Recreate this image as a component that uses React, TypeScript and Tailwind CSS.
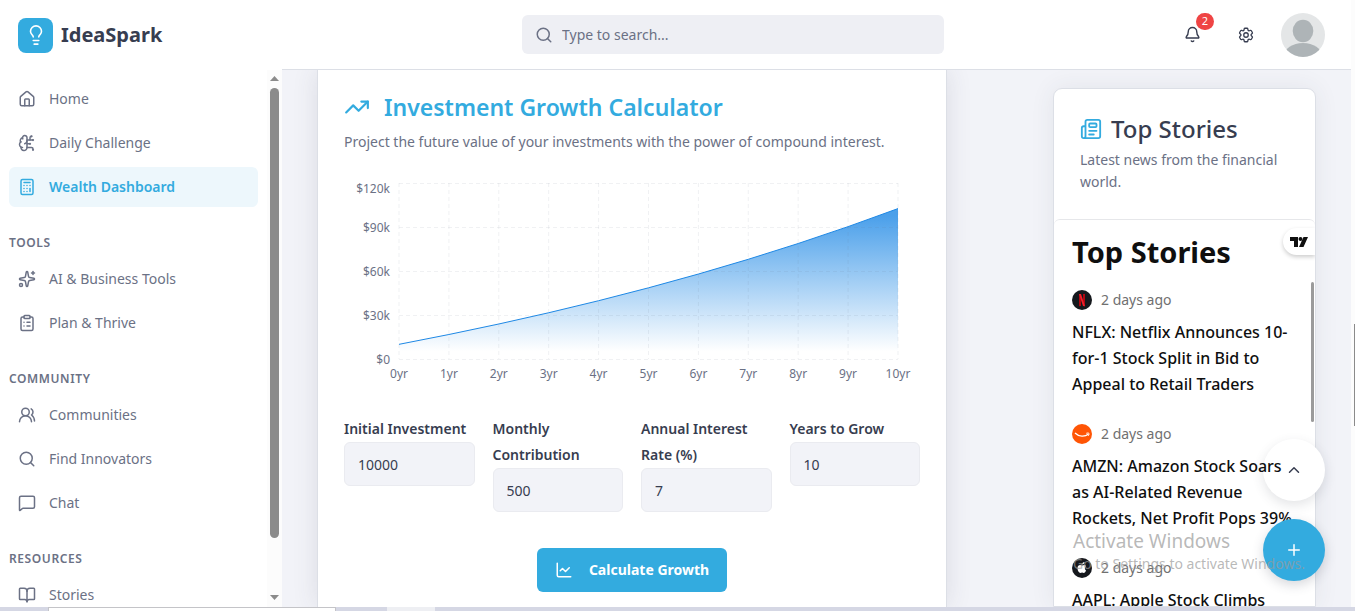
import React, { useState } from 'react';
import {
  Bell,
  BookOpen,
  BrainCircuit,
  Calculator,
  ChartLine,
  ChevronUp,
  ClipboardList,
  House,
  Lightbulb,
  MessageSquare,
  Newspaper,
  Plus,
  Search,
  Sparkles,
  TrendingUp,
  UsersRound,
  type LucideIcon,
} from 'lucide-react';
import { HiOutlineCog6Tooth } from 'react-icons/hi2';

interface NavEntry {
  label: string;
  icon: LucideIcon;
  active?: boolean;
}

const NAV: { title?: string; items: NavEntry[] }[] = [
  {
    items: [
      { label: 'Home', icon: House },
      { label: 'Daily Challenge', icon: BrainCircuit },
      { label: 'Wealth Dashboard', icon: Calculator, active: true },
    ],
  },
  {
    title: 'Tools',
    items: [
      { label: 'AI & Business Tools', icon: Sparkles },
      { label: 'Plan & Thrive', icon: ClipboardList },
    ],
  },
  {
    title: 'Community',
    items: [
      { label: 'Communities', icon: UsersRound },
      { label: 'Find Innovators', icon: Search },
      { label: 'Chat', icon: MessageSquare },
    ],
  },
  {
    title: 'Resources',
    items: [{ label: 'Stories', icon: BookOpen }],
  },
];

const Sidebar: React.FC = () => (
  <aside className="flex w-[282px] shrink-0 flex-col overflow-hidden bg-white">
    <a href="#" className="flex h-[70px] shrink-0 items-center gap-2 px-[18px]">
      <span className="flex size-[35px] items-center justify-center rounded-lg bg-[#33abdf] text-white">
        <Lightbulb size={22} strokeWidth={1.75} />
      </span>
      <span className="text-xl font-bold text-[#373d50]">IdeaSpark</span>
    </a>
    <div className="flex min-h-0 flex-1">
      <nav className="min-w-0 flex-1 overflow-hidden pt-[9px] pr-[9px] pl-[9px]">
        {NAV.map((section, i) => (
          <div key={i}>
            {section.title && (
              <h2 className="mt-6 mb-1 text-xs leading-6 font-semibold tracking-wider text-[#6b7185] uppercase">
                {section.title}
              </h2>
            )}
            <ul className="flex flex-col gap-1">
              {section.items.map(({ label, icon: Icon, active }) => (
                <li key={label}>
                  <a
                    href="#"
                    className={`flex h-10 items-center gap-[13px] rounded-md px-[9px] text-sm ${
                      active ? 'bg-[#edf7fc] font-semibold text-[#33abdf]' : 'text-[#6b7185]'
                    }`}
                  >
                    <Icon size={18} strokeWidth={2} />
                    {label}
                  </a>
                </li>
              ))}
            </ul>
          </div>
        ))}
      </nav>
      <div className="flex w-[15px] flex-col items-center bg-[#fcfcfc] pt-[6px] pb-[7px]">
        <svg width="9" height="5" viewBox="0 0 9 5" fill="#8b8b8b"><path d="M0 5 4.500 0 9 5z" /></svg>
        <div className="mt-[7px] h-[450px] w-[9px] rounded-full bg-[#8b8b8b]" />
        <svg className="mt-auto" width="9" height="5" viewBox="0 0 9 5" fill="#8b8b8b"><path d="M0 0 4.500 5 9 0z" /></svg>
      </div>
    </div>
  </aside>
);

const Header: React.FC = () => (
  <header className="flex h-[70px] shrink-0 items-center border-b border-[#dcdfe6] bg-white pr-[26px]">
    <div className="flex flex-1 justify-center">
      <label className="flex h-[39px] w-[422px] items-center gap-[9px] rounded-md bg-[#eeeff4] px-[13px] text-[#6b7185]">
        <Search size={18} strokeWidth={2} />
        <input
          type="search"
          aria-label="Search"
          placeholder="Type to search..."
          className="min-w-0 flex-1 bg-transparent text-sm outline-none placeholder:text-[#6b7185]"
        />
      </label>
    </div>
    <button aria-label="Notifications" className="relative mr-[36px] text-[#373d50]">
      <Bell size={17} strokeWidth={2} />
      <span className="absolute -top-[13px] left-3 flex h-[17px] w-[18px] items-center justify-center rounded-full bg-[#ef4444] text-[11px] text-white">
        2
      </span>
    </button>
    <button aria-label="Settings" className="mr-[26px] text-[#373d50]">
      <HiOutlineCog6Tooth size={18} strokeWidth={1.75} />
    </button>
    <button aria-label="Account" className="size-11 overflow-hidden rounded-full">
      <svg viewBox="0 0 44 44" className="size-full">
        <rect width="44" height="44" fill="#e4e6e7" />
        <ellipse cx="22" cy="18" rx="10.300" ry="11.300" fill="#aeb4b7" />
        <ellipse cx="22" cy="43" rx="19" ry="13" fill="#aeb4b7" />
      </svg>
    </button>
  </header>
);

const PLOT = { left: 55, right: 554, top: 13, bottom: 189 };
const MAX_VALUE = 120000;

const GrowthChart: React.FC<{ values: number[] }> = ({ values }) => {
  const years = values.length - 1;
  const x = (i: number) => PLOT.left + ((PLOT.right - PLOT.left) * i) / years;
  const y = (v: number) => PLOT.bottom - ((PLOT.bottom - PLOT.top) * v) / MAX_VALUE;
  const line = values.map((v, i) => `${i ? 'L' : 'M'}${x(i)} ${y(v)}`).join('');

  return (
    <svg viewBox="0 0 576 220" className="w-full text-xs" role="img" aria-label="Projected growth">
      <defs>
        <linearGradient id="growth" x1="0" y1="0" x2="0" y2="1">
          <stop offset="5%" stopColor="#1e88e5" stopOpacity={0.8} />
          <stop offset="95%" stopColor="#1e88e5" stopOpacity={0} />
        </linearGradient>
      </defs>
      <path d={`${line}V${PLOT.bottom}H${PLOT.left}Z`} fill="url(#growth)" />
      <g stroke="#6b7185" strokeOpacity="0.1" strokeDasharray="4 3">
        {[0, 30000, 60000, 90000, 120000].map((v) => (
          <path key={v} d={`M${PLOT.left} ${y(v) + 0.5}H${PLOT.right}`} />
        ))}
        {values.map((_, i) => (
          <path key={i} d={`M${x(i)} ${PLOT.top}V${PLOT.bottom}`} />
        ))}
      </g>
      <path d={line} fill="none" stroke="#1e88e5" />
      <g fill="#6b7185">
        {[0, 30, 60, 90, 120].map((k) => (
          <text key={k} x="46" y={Math.max(y(k * 1000), 18) + 5} textAnchor="end">
            {k ? `$${k}k` : '$0'}
          </text>
        ))}
        {values.map((_, i) => (
          <text key={i} x={x(i)} y="208" textAnchor="middle">
            {i}yr
          </text>
        ))}
      </g>
    </svg>
  );
};

const FIELDS = [
  { id: 'initial', label: 'Initial Investment' },
  { id: 'monthly', label: 'Monthly Contribution' },
  { id: 'rate', label: 'Annual Interest Rate (%)' },
  { id: 'years', label: 'Years to Grow' },
] as const;

type Form = Record<(typeof FIELDS)[number]['id'], string>;

const project = (form: Form) => {
  const values = [Number(form.initial)];
  for (let i = 0; i < Math.max(1, Number(form.years)); i++) {
    values.push(values[i] * (1 + Number(form.rate) / 100) + Number(form.monthly) * 12);
  }
  return values;
};

const GrowthCalculator: React.FC = () => {
  const [form, setForm] = useState<Form>({ initial: '10000', monthly: '500', rate: '7', years: '10' });
  const [values, setValues] = useState(() => project(form));

  return (
    <section className="min-w-0 flex-1 border-x border-[#dcdfe6] bg-white px-[26px] pt-[19px] shadow-[0_0_24px_rgba(55,61,80,0.12)]">
      <h1 className="flex items-center gap-[14px] text-[23px] leading-9 font-semibold text-[#33abdf]">
        <TrendingUp size={26} />
        Investment Growth Calculator
      </h1>
      <p className="mt-[5px] text-sm leading-6 text-[#6b7185]">
        Project the future value of your investments with the power of compound interest.
      </p>
      <div className="mt-4">
        <GrowthChart values={values} />
      </div>
      <form
        onSubmit={(e) => {
          e.preventDefault();
          setValues(project(form));
        }}
      >
        <div className="mt-[26px] grid grid-cols-4 items-start gap-[18px]">
          {FIELDS.map(({ id, label }) => (
            <div key={id}>
              <label htmlFor={id} className="block text-sm leading-[26px] font-semibold text-[#373d50]">
                {label}
              </label>
              <input
                id={id}
                inputMode="decimal"
                value={form[id]}
                onChange={(e) => setForm({ ...form, [id]: e.target.value })}
                className="h-11 w-full rounded-md border border-[#eaebf0] bg-[#f2f3f8] px-[13px] text-sm text-[#373d50] outline-none"
              />
            </div>
          ))}
        </div>
        <button
          type="submit"
          className="mx-auto mt-9 flex h-11 items-center gap-4 rounded-md bg-[#33abdf] px-[18px] text-sm font-bold text-white"
        >
          <ChartLine size={18} strokeWidth={2} />
          Calculate Growth
        </button>
      </form>
    </section>
  );
};

const NetflixLogo = () => (
  <svg viewBox="0 0 20 20" className="size-5">
    <circle cx="10" cy="10" r="10" fill="#15181d" />
    <path d="M7 4h2v12l-2 .3zM11 4h2v12.300l-2-.3z" fill="#b1060f" />
    <path d="M7 4h2l4 12.300-2-.3z" fill="#f0202c" />
  </svg>
);

const AmazonLogo = () => (
  <svg viewBox="0 0 20 20" className="size-5">
    <circle cx="10" cy="10" r="10" fill="#ff5505" />
    <path d="M3 9c4 4 10 4 13.500 1" fill="none" stroke="#fff" strokeWidth="1.300" />
    <path d="M14.300 9.300c1.200-.4 2.400-.3 2.700.1s-.1 1.600-.8 2.500" fill="none" stroke="#fff" />
  </svg>
);

const AppleLogo = () => (
  <svg viewBox="0 0 20 20" className="size-5">
    <circle cx="10" cy="10" r="10" fill="#15181d" />
    <path
      d="M12.500 4c.1 1.300-1 2.500-2.300 2.500C10.100 5.200 11.200 4.100 12.500 4zM14 12.500c-.5 1.200-1.300 2.500-2.200 2.500-.7 0-1-.4-1.700-.4s-1.100.4-1.700.4C7 15 5.500 12.500 5.500 10.300c0-2 1.300-3.200 2.600-3.200.8 0 1.400.5 2 .5s1.300-.5 2.200-.5c.6 0 1.300.3 1.700.9-1.600 1-1.500 3.400 0 4.500z"
      fill="#fff"
    />
  </svg>
);

const STORIES = [
  { logo: NetflixLogo, title: 'NFLX: Netflix Announces 10-for-1 Stock Split in Bid to Appeal to Retail Traders' },
  { logo: AmazonLogo, title: 'AMZN: Amazon Stock Soars as AI-Related Revenue Rockets, Net Profit Pops 39%' },
  { logo: AppleLogo, title: 'AAPL: Apple Stock Climbs' },
];

const TopStories: React.FC = () => (
  <section className="mt-[18px] flex w-[263px] shrink-0 flex-col rounded-t-[9px] border border-[#dcdfe6] bg-white shadow-[0_0_24px_rgba(55,61,80,0.08)]">
    <div className="h-[130px] shrink-0 px-[26px] pt-[22px]">
      <h2 className="flex items-center gap-[9px] text-2xl leading-9 font-medium text-[#373d50]">
        <Newspaper size={22} className="text-[#33abdf]" />
        Top Stories
      </h2>
      <p className="mt-[2px] text-sm leading-[22px] text-[#6b7185]">Latest news from the financial world.</p>
    </div>
    <div className="relative min-h-0 flex-1 overflow-hidden rounded-t-md border-t border-[#e6e7ea] pr-4 pl-[18px]">
      <h3 className="pt-3 text-[29px] leading-10 font-bold text-[#0f0f0f]">Top Stories</h3>
      <a
        href="#"
        aria-label="TradingView"
        className="absolute top-2 right-0 flex h-[27px] w-8 items-center rounded-l-full bg-white pl-[7px] shadow-[0_2px_4px_rgba(0,0,0,0.2)]"
      >
        <svg width="18" height="10" viewBox="0 0 18 10" fill="#0f0f0f">
          <path d="M0 0h8v10H4V4H0zM13.500 0H18l-4.500 10H9z" />
          <circle cx="10.500" cy="2" r="2" />
        </svg>
      </a>
      <div className="absolute top-[62px] right-px h-[140px] w-[3px] rounded-full bg-[#9b9b9b]" />
      {/* headlines stay readable above the back-to-top button */}
      <ul className="relative z-20 mt-[18px] flex flex-col gap-[27px]">
        {STORIES.map(({ logo: Logo, title }) => (
          <li key={title}>
            <div className="flex h-5 items-center gap-[9px] text-sm text-[#707070]">
              <Logo />2 days ago
            </div>
            <a href="#" className="mt-[9px] block text-base leading-[26px] font-medium text-[#0f0f0f]">
              {title}
            </a>
          </li>
        ))}
      </ul>
    </div>
  </section>
);

const App: React.FC = () => (
  <div className="relative flex h-screen flex-col overflow-hidden bg-[#f2f3f8] font-['Noto_Sans','Open_Sans',sans-serif]">
    <div className="flex min-h-0 flex-1">
      <Sidebar />
      <div className="flex min-w-0 flex-1 flex-col">
        <Header />
        <main className="flex min-h-0 flex-1 gap-[106px] overflow-hidden pr-[35px] pl-[35px]">
          <GrowthCalculator />
          <TopStories />
        </main>
      </div>
      <div className="flex w-1 flex-col items-end bg-[#fcfcfc] pt-[324px]">
        <div className="h-[102px] w-px bg-[#8b8b8b]" />
      </div>
    </div>
    <div className="flex h-1 shrink-0 bg-[#d5d7e4] pl-12">
      <div className="w-[288px] border border-b-0 border-[#c4c4c8] bg-white" />
      <div className="ml-[51px] w-12 bg-[#eeeff3]" />
    </div>

    <button
      aria-label="Back to top"
      className="absolute right-[30px] bottom-[110px] z-10 flex size-[62px] items-center justify-center rounded-full bg-white text-[#373d50] shadow-[0_4px_12px_rgba(55,61,80,0.14)]"
    >
      <ChevronUp size={18} />
    </button>
    <button
      aria-label="Create"
      className="absolute right-[30px] bottom-[30px] z-30 flex size-[62px] items-center justify-center rounded-full bg-[#33abdf] text-white shadow-[0_4px_12px_rgba(55,61,80,0.2)]"
    >
      <Plus size={18} strokeWidth={2} />
    </button>
    <div className="pointer-events-none absolute right-[46px] bottom-9 z-40 w-[236px] whitespace-nowrap text-[#9a9a9a]/70">
      <p className="text-[19px] leading-6">Activate Windows</p>
      <p className="text-sm leading-[22px]">Go to Settings to activate Windows.</p>
    </div>
  </div>
);

export default App;
